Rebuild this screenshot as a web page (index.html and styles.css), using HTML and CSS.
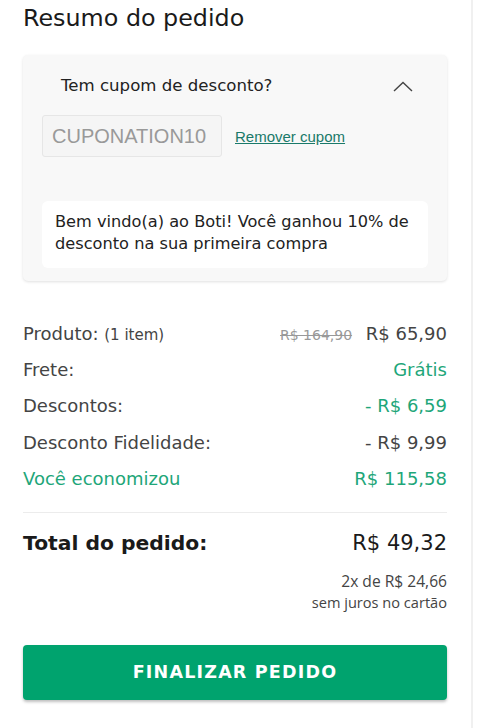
FILE: index.html
```html
<!DOCTYPE html>
<html lang="pt-BR">
<head>
    <meta charset="UTF-8">
    <meta name="viewport" content="width=device-width, initial-scale=1.0">
    <title>Resumo do pedido</title>
    <link rel="stylesheet" href="styles.css">
</head>
<body>
    <aside class="summary">
        <h1 class="summary-title">Resumo do pedido</h1>

        <!-- Cupom -->
        <section class="coupon">
            <div class="coupon-header">
                <span>Tem cupom de desconto?</span>
                <svg class="chevron" width="20" height="11" viewBox="0 0 20 11">
                    <polyline points="1,10 10,1.5 19,10" fill="none" stroke="#444" stroke-width="1.4"/>
                </svg>
            </div>
            <div class="coupon-form">
                <input type="text" class="coupon-input" value="CUPONATION10" disabled>
                <a href="#" class="coupon-remove">Remover cupom</a>
            </div>
            <div class="coupon-message">
                Bem vindo(a) ao Boti! Você ganhou 10% de desconto na sua primeira compra
            </div>
        </section>

        <!-- Valores -->
        <section class="values">
            <div class="row">
                <span>Produto: <small>(1 item)</small></span>
                <span><s class="old-price">R$ 164,90</s> R$ 65,90</span>
            </div>
            <div class="row">
                <span>Frete:</span>
                <span class="green">Grátis</span>
            </div>
            <div class="row">
                <span>Descontos:</span>
                <span class="green">- R$ 6,59</span>
            </div>
            <div class="row">
                <span>Desconto Fidelidade:</span>
                <span>- R$ 9,99</span>
            </div>
            <div class="row green">
                <span>Você economizou</span>
                <span>R$ 115,58</span>
            </div>
        </section>

        <section class="total">
            <div class="total-row">
                <strong>Total do pedido:</strong>
                <span>R$ 49,32</span>
            </div>
            <p class="installments">2x de R$ 24,66</p>
            <p class="installments-note">sem juros no cartão</p>
        </section>

        <button class="checkout">FINALIZAR PEDIDO</button>
    </aside>
</body>
</html>
```

FILE: styles.css
```css
body {
    margin: 0;
    padding: 0;
    background-color: white;
    font-family: "DejaVu Sans", "Open Sans", sans-serif;
    color: #333;
}

.summary {
    width: 424px;
    min-height: 728px;
    padding: 0 24px 0 23px;
    border-right: 2px solid #f0f0f0;
    box-sizing: content-box;
}

.summary-title {
    margin: 0;
    padding-top: 2px;
    font-size: 23.8px;
    font-weight: 400;
    line-height: 32px;
    color: #1a1a1a;
}

.coupon {
    margin-top: 21px;
    background-color: #f8f8f8;
    border-radius: 5px;
    box-shadow: 0 1px 3px rgba(0, 0, 0, 0.12);
    padding: 0 19px 13px 19px;
}

.coupon-header {
    display: flex;
    justify-content: space-between;
    align-items: center;
    height: 60px;
    padding: 0 15px 0 19px;
    font-size: 16.6px;
    color: #222;
}

.chevron {
    display: block;
    margin-top: 2px;
}

.coupon-form {
    display: flex;
    align-items: center;
    gap: 13px;
}

.coupon-input {
    width: 180px;
    height: 42px;
    box-sizing: border-box;
    padding: 0 9px;
    border: 1px solid #e6e6e6;
    border-radius: 3px;
    background-color: #f5f5f5;
    font-family: "Liberation Sans", Arial, sans-serif;
    font-size: 20px;
    color: #999;
}

.coupon-remove {
    font-family: "Liberation Sans", Arial, sans-serif;
    font-size: 15px;
    color: #1a7a6a;
    text-decoration: underline;
}

.coupon-message {
    margin-top: 44px;
    background-color: white;
    border-radius: 6px;
    padding: 10px 13px 13px 13px;
    font-size: 16.2px;
    line-height: 22px;
    color: #222;
}

.values {
    padding: 35px 0 15px 0;
    border-bottom: 1px solid #ececec;
}

.row {
    display: flex;
    justify-content: space-between;
    align-items: baseline;
    height: 36.2px;
    line-height: 36px;
    font-size: 18px;
    color: #444;
}

.row small {
    font-size: 15px;
}

.old-price {
    font-size: 14px;
    color: #999;
    margin-right: 8px;
}

.green {
    color: #1ea679;
}

.total {
    padding-top: 14px;
    text-align: right;
}

.total-row {
    display: flex;
    justify-content: space-between;
    align-items: baseline;
    font-size: 21px;
    line-height: 32px;
    color: #1a1a1a;
}

.total-row strong {
    font-size: 20.3px;
}

.installments {
    margin: 11px 0 0 0;
    font-family: "Open Sans", sans-serif;
    font-size: 15.6px;
    line-height: 22px;
    color: #444;
}

.installments-note {
    margin: 0;
    font-family: "Open Sans", sans-serif;
    font-size: 14.6px;
    line-height: 20px;
    color: #444;
}

.checkout {
    display: block;
    width: 100%;
    height: 55px;
    margin-top: 33px;
    border: none;
    border-radius: 4px;
    background-color: #00a36e;
    box-shadow: 0 2px 3px rgba(0, 0, 0, 0.25);
    color: white;
    font-family: "DejaVu Sans", "Open Sans", sans-serif;
    font-size: 17.5px;
    font-weight: 700;
    letter-spacing: 1.2px;
    cursor: pointer;
}
```
